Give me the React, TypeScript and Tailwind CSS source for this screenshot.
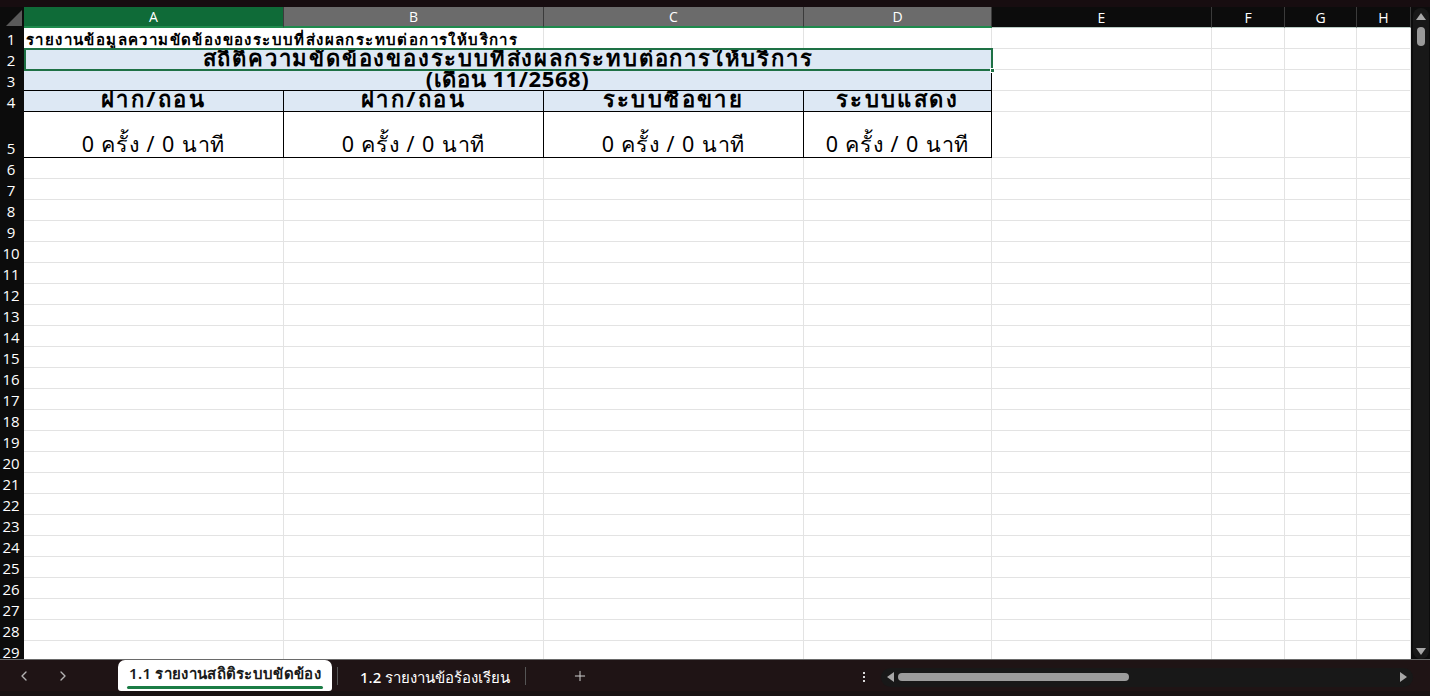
import { ChevronLeft, ChevronRight, Plus } from "lucide-react";

const FONT = "font-['Tahoma','Noto_Sans','DejaVu_Sans',sans-serif]";

const COLS = [
  { key: "A", head: "bg-[#0f6b38] text-white border-b-2 border-[#1e8a4c]" },
  { key: "B", head: "bg-[#6b6b6b] text-white border-b-2 border-[#1e8a4c]" },
  { key: "C", head: "bg-[#6b6b6b] text-white border-b-2 border-[#1e8a4c]" },
  { key: "D", head: "bg-[#6b6b6b] text-white border-b-2 border-[#1e8a4c]" },
  { key: "E", head: "bg-[#0c0c0c] text-white border-b border-[#b9ccc4]" },
  { key: "F", head: "bg-[#0c0c0c] text-white border-b border-[#b9ccc4]" },
  { key: "G", head: "bg-[#0c0c0c] text-white border-b border-[#b9ccc4]" },
  { key: "H", head: "bg-[#0c0c0c] text-white border-b border-[#b9ccc4]" },
];

const GRID =
  "grid grid-cols-[24px_260px_260px_260px_188px_220px_73px_72px_54px] grid-rows-[21px_21px_21px_21px_21px_46px] auto-rows-[21px]";
const cell = "border-r border-b border-[#e3e3e3] bg-white";

const HEADS = ["ฝาก/ถอน", "ฝาก/ถอน", "ระบบซื้อขาย", "ระบบแสดง"];

function RowHead({ n }: { n: number }) {
  return (
    <div className="bg-[#0c0c0c] text-white text-[15px] leading-none flex items-end justify-center pr-[2px] pb-[2px] font-['Open_Sans',sans-serif]">
      {n}
    </div>
  );
}

function Blank({ n }: { n: number }) {
  return (
    <>
      {Array.from({ length: n }).map((_, i) => (
        <div key={i} className={cell} />
      ))}
    </>
  );
}

function Sheet() {
  const emptyRows = Array.from({ length: 24 }, (_, i) => i + 6);
  return (
    <div className={`${GRID} w-[1411px] h-[652px] overflow-hidden ${FONT}`}>
      {/* column headers */}
      <div className="bg-[#0c0c0c] flex items-end justify-end p-[2px]">
        <div className="w-0 h-0 border-l-[16px] border-l-transparent border-b-[16px] border-b-[#5a5a5a]" />
      </div>
      {COLS.map((c) => (
        <div
          key={c.key}
          className={`${c.head} border-r border-r-[#3b3b3b] flex items-center justify-center text-[14px] font-['Open_Sans',sans-serif]`}
        >
          {c.key}
        </div>
      ))}

      {/* row 1 */}
      <RowHead n={1} />
      <div className={`${cell} col-span-2 flex items-end pl-[2px] pb-px text-[15px] tracking-[1.4px] font-bold text-black leading-none whitespace-nowrap`}>
        รายงานข้อมูลความขัดข้องของระบบที่ส่งผลกระทบต่อการให้บริการ
      </div>
      <Blank n={6} />

      {/* row 2 */}
      <RowHead n={2} />
      <div className="col-span-4 relative">
        <div className="h-full bg-[#dde8f4] overflow-hidden flex items-end justify-center text-[22px] tracking-[1.8px] font-bold text-black leading-none pb-[2px] whitespace-nowrap">
          สถิติความขัดข้องของระบบที่ส่งผลกระทบต่อการให้บริการ
        </div>
        <span className="absolute -top-px left-0 -right-px -bottom-px border-2 border-[#1e7145] pointer-events-none" />
        <span className="absolute -right-[3px] -bottom-[3px] w-[5px] h-[5px] bg-[#1e7145] border border-white" />
      </div>
      <Blank n={4} />

      {/* row 3 */}
      <RowHead n={3} />
      <div className="col-span-4 bg-[#dde8f4] border-b border-r border-black flex items-end justify-center text-[22px] tracking-[0.6px] font-bold text-black leading-none pb-[1px] whitespace-nowrap">
        (เดือน 11/2568)
      </div>
      <Blank n={4} />

      {/* row 4 */}
      <RowHead n={4} />
      {HEADS.map((t, i) => (
        <div
          key={i}
          className="bg-[#dde8f4] border-r border-b border-black overflow-hidden flex items-end justify-center text-[22px] tracking-[2.4px] font-bold text-black leading-none pb-[2px] whitespace-nowrap"
        >
          {t}
        </div>
      ))}
      <Blank n={4} />

      {/* row 5 */}
      <RowHead n={5} />
      {HEADS.map((_, i) => (
        <div
          key={i}
          className="bg-white border-r border-b border-black flex items-end justify-center text-[21.5px] tracking-[0.9px] text-black leading-none pb-[3px] whitespace-nowrap"
        >
          0 ครั้ง / 0 นาที
        </div>
      ))}
      <Blank n={4} />

      {emptyRows.map((n) => (
        <div key={n} className="contents">
          <RowHead n={n} />
          <Blank n={8} />
        </div>
      ))}
    </div>
  );
}

function VScroll() {
  return (
    <div className="w-[19px] h-[652px] bg-[#0c0c0c] pl-[2px] pr-[1px] pt-[1px]">
      <div className="h-full bg-[#181818] rounded-[8px] flex flex-col items-center">
        <div className="mt-[5px] w-0 h-0 border-l-[5px] border-r-[5px] border-b-[7px] border-l-transparent border-r-transparent border-b-[#a7a7a7]" />
        <div className="mt-[7px] w-[8px] h-[19px] rounded-full bg-[#9a9a9a]" />
        <div className="flex-1" />
        <div className="mb-[4px] w-0 h-0 border-l-[5px] border-r-[5px] border-t-[7px] border-l-transparent border-r-transparent border-t-[#a7a7a7]" />
      </div>
    </div>
  );
}

function TabBar() {
  return (
    <div className={`h-[37px] bg-[#1f1415] flex flex-col border-t border-[#6a6a6a] ${FONT}`}>
      <div className="h-[31px] flex items-center">
        <div className="w-[118px] h-full flex items-center pl-[16px]">
          <ChevronLeft size={16} strokeWidth={2} className="text-[#b4b4b4]" />
          <ChevronRight size={16} strokeWidth={2} className="ml-[23px] text-[#b4b4b4]" />
        </div>
        <div className="w-[214px] h-full bg-white rounded-t-[7px] rounded-b-[3px] flex flex-col items-center justify-center pt-[3px]">
          <span className="text-[15px] tracking-[0.3px] font-semibold text-[#1a1a1a] leading-none whitespace-nowrap">
            1.1 รายงานสถิติระบบขัดข้อง
          </span>
          <span className="mt-[5px] w-[196px] h-[3px] rounded-full bg-[#1b7c45]" />
        </div>
        <span className="ml-[5px] w-px h-[18px] bg-[#555]" />
        <span className="ml-[22px] w-[145px] text-[15px] font-medium text-white leading-none whitespace-nowrap pt-[4px]">
          1.2 รายงานข้อร้องเรียน
        </span>
        <span className="ml-[20px] w-px h-[18px] bg-[#555]" />
        <Plus size={16} strokeWidth={1.5} className="ml-[46px] text-[#cfcfcf]" />
        <div className="ml-[275px] flex flex-col gap-[2px] mt-[2px]">
          <span className="w-[2px] h-[2px] bg-[#d8d8d8]" />
          <span className="w-[2px] h-[2px] bg-[#d8d8d8]" />
          <span className="w-[2px] h-[2px] bg-[#d8d8d8]" />
        </div>
        <div className="ml-[16px] w-[532px] h-[19px] mt-[3px] bg-[#181818] rounded-full flex items-center pl-[6px] pr-[6px]">
          <div className="w-0 h-0 border-t-[5px] border-b-[5px] border-r-[7px] border-t-transparent border-b-transparent border-r-[#a7a7a7]" />
          <div className="ml-[4px] w-[231px] h-[8px] rounded-full bg-[#9c9c9c]" />
          <div className="flex-1" />
          <div className="w-0 h-0 border-t-[5px] border-b-[5px] border-l-[7px] border-t-transparent border-b-transparent border-l-[#a7a7a7]" />
        </div>
      </div>
      <div className="flex-1 bg-[#181313]" />
    </div>
  );
}

export default function App() {
  return (
    <div className="w-[1430px] h-[696px] overflow-hidden bg-[#170d10] flex flex-col">
      <div className="h-[7px] bg-[#170d10]" />
      <div className="flex">
        <Sheet />
        <VScroll />
      </div>
      <TabBar />
    </div>
  );
}
